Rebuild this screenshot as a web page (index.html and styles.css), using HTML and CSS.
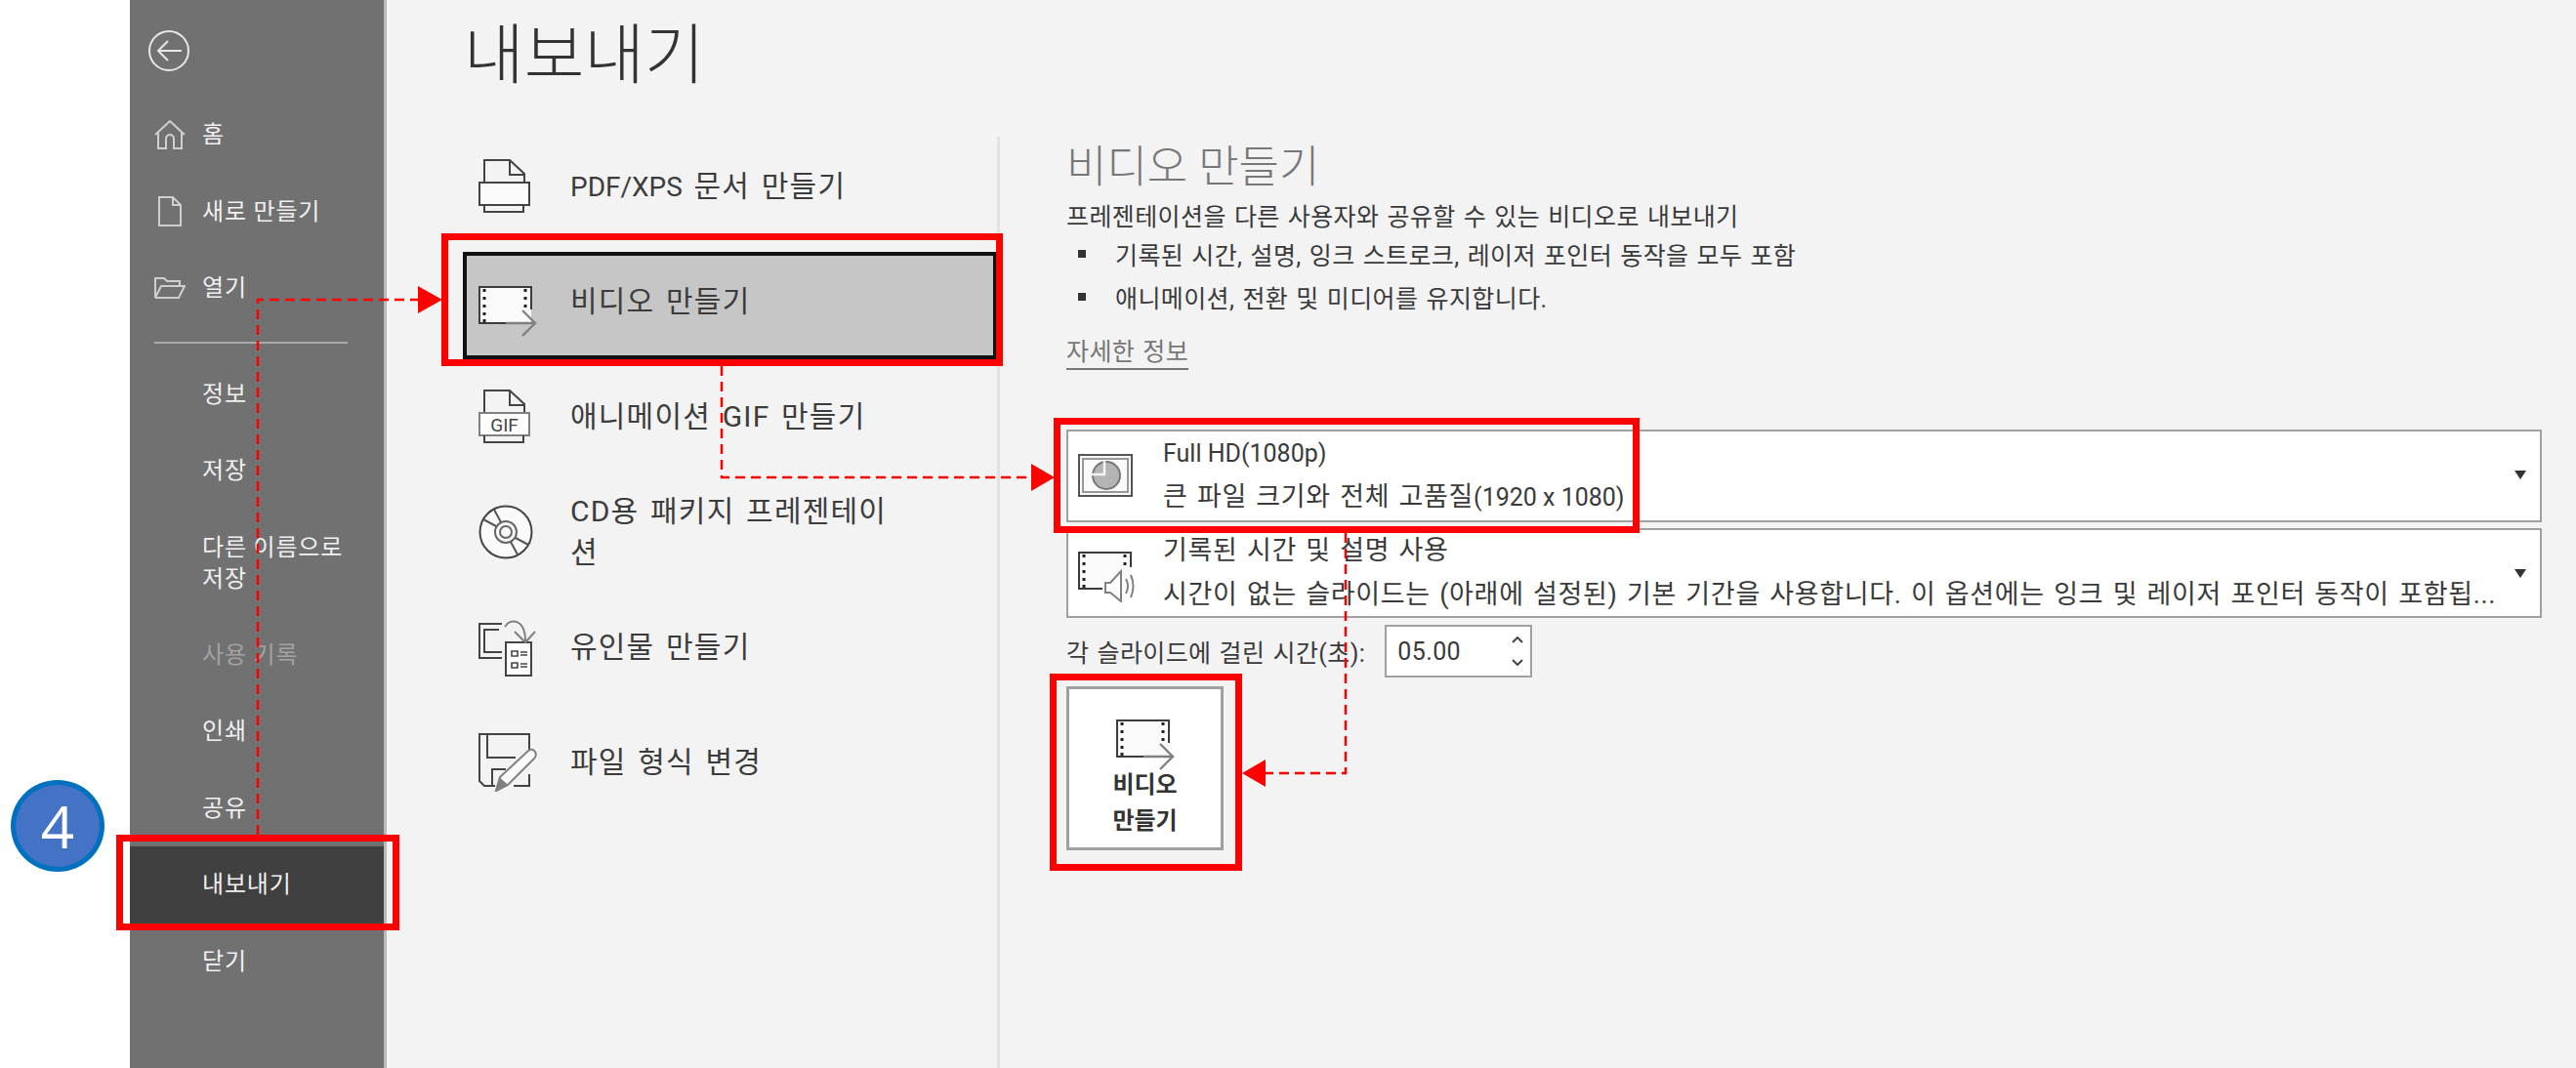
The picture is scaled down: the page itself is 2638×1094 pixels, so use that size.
FILE: index.html
```html
<!DOCTYPE html>
<html lang="ko">
<head>
    <meta charset="UTF-8">
    <title>내보내기</title>
    <link rel="stylesheet" href="styles.css">
</head>
<body>
    <svg class="defs" width="0" height="0">
        <symbol id="film" viewBox="0 0 60 52">
            <rect x="1" y="1" width="53" height="37" fill="#fafafa"/>
            <path d="M28 38H1V1H54V24" fill="none" stroke="#3c3c3c" stroke-width="2"/>
            <path d="M6 3v3M6 11v3M6 19v3M6 27v3M6 34v3M48 3v3M48 11v3M48 19v3" stroke="#222" stroke-width="3"/>
            <path d="M28 38H58M45 25L58 38L45 51" fill="none" stroke="#808080" stroke-width="2.4"/>
        </symbol>
    </svg>

    <div class="page">
        <aside class="sidebar">
            <div class="back">
                <svg width="42" height="42" viewBox="0 0 42 42" fill="none" stroke="#e8e8e8" stroke-width="2"><circle cx="21" cy="21" r="20"/><path d="M10 21H34M20 11L10 21L20 31"/></svg>
            </div>
            <div class="nav-item has-icon">
                <span class="nav-icon"><svg width="32" height="30" viewBox="0 0 32 30" fill="none" stroke="#cfcfcf" stroke-width="2"><path d="M1 15L16 1L31 15M4 13V29H12V19A4 4 0 0 1 20 19V29H28V13"/></svg></span>
                홈
            </div>
            <div class="nav-item has-icon">
                <span class="nav-icon"><svg width="24" height="31" viewBox="0 0 24 31" fill="none" stroke="#cfcfcf" stroke-width="2"><path d="M1 1H15L23 9V30H1ZM15 1V9H23"/></svg></span>
                새로 만들기
            </div>
            <div class="nav-item has-icon">
                <span class="nav-icon"><svg width="32" height="22" viewBox="0 0 32 22" fill="none" stroke="#cfcfcf" stroke-width="2"><path d="M1 21V1H10L13 4H26V8M1 21H25L31 9H7L1 21"/></svg></span>
                열기
            </div>
            <div class="nav-divider"></div>
            <div class="nav-item">정보</div>
            <div class="nav-item">저장</div>
            <div class="nav-item nav-tall">다른 이름으로<br>저장</div>
            <div class="nav-item nav-disabled">사용 기록</div>
            <div class="nav-item">인쇄</div>
            <div class="nav-item">공유</div>
            <div class="nav-item nav-active">내보내기</div>
            <div class="nav-item">닫기</div>
        </aside>

        <main class="main">
            <h1 class="title">내보내기</h1>
            <div class="columns">
                <ul class="export-list">
                    <li class="export-item">
                        <span class="export-icon">
                            <svg width="54" height="56" viewBox="0 0 54 56" fill="none" stroke="#444" stroke-width="2"><path d="M6 24V1H32L47 15V24M32 1V16H47"/><rect x="1" y="24" width="51" height="23" fill="#fbfbfb"/><path d="M6 47V54H46V47"/></svg>
                        </span>
                        <span><span class="pdf-label">PDF/XPS</span> 문서 만들기</span>
                    </li>
                    <li class="export-item selected">
                        <span class="export-icon icon-film"><svg width="60" height="52"><use href="#film"/></svg></span>
                        비디오 만들기
                    </li>
                    <li class="export-item">
                        <span class="export-icon">
                            <svg width="54" height="56" viewBox="0 0 54 56" fill="none" stroke="#444" stroke-width="2"><path d="M6 24V1H32L47 15V24M32 1V16H47"/><rect x="1" y="24" width="51" height="23" fill="#fff" stroke="#808080"/><path d="M6 47V54H46V47"/><text class="gif-label" x="26.500" y="43" text-anchor="middle">GIF</text></svg>
                        </span>
                        애니메이션 GIF 만들기
                    </li>
                    <li class="export-item">
                        <span class="export-icon">
                            <svg width="56" height="56" viewBox="0 0 56 56" fill="none" stroke="#444" stroke-width="2"><circle cx="28" cy="28" r="26.500" fill="#fafafa"/><circle cx="28" cy="28" r="11" stroke="#666"/><circle cx="28" cy="28" r="6" stroke="#666"/><path d="M5 15L18 22M38 34L51 41M33 38L40 51M23 18L16 5" stroke="#555"/></svg>
                        </span>
                        <span>CD용 패키지 프레젠테이<br>션</span>
                    </li>
                    <li class="export-item">
                        <span class="export-icon">
                            <svg width="60" height="59" viewBox="0 0 60 59" fill="none" stroke="#444" stroke-width="2"><path d="M24 5H1V40H24M21 11H6V34H24"/><rect x="28" y="24" width="26" height="34" fill="#fff"/><path d="M34 33h6v5h-6zM34 45h6v5h-6zM43 34h7M43 37h7M43 46h7M43 49h7" stroke-width="1.600"/><path d="M27 8C32 -1 48 -1 48 23M37 13L48 24L58 13" stroke="#808080"/></svg>
                        </span>
                        유인물 만들기
                    </li>
                    <li class="export-item">
                        <span class="export-icon">
                            <svg width="60" height="60" viewBox="0 0 60 60" fill="none" stroke="#444" stroke-width="2"><path d="M52 19V1H1V49L6 54H17M9 1V25H38M14 54V37H28M52 42V54H36"/><path d="M18 59L22 45L51 18Q55 15 58 19Q60 23 57 26L30 53Z" fill="#fbfbfb" stroke="#808080"/><path d="M18 59L22 47L29 53Z" fill="#808080" stroke="#808080"/></svg>
                        </span>
                        파일 형식 변경
                    </li>
                </ul>

                <section class="detail">
                    <h2 class="detail-title">비디오 만들기</h2>
                    <p class="detail-desc">프레젠테이션을 다른 사용자와 공유할 수 있는 비디오로 내보내기</p>
                    <ul class="bullets">
                        <li>기록된 시간, 설명, 잉크 스트로크, 레이저 포인터 동작을 모두 포함</li>
                        <li>애니메이션, 전환 및 미디어를 유지합니다.</li>
                    </ul>
                    <a class="more-link">자세한 정보</a>

                    <div class="dropdown quality">
                        <span class="dropdown-icon">
                            <svg width="56" height="44" viewBox="0 0 56 44" fill="none" stroke="#555" stroke-width="2"><rect x="1" y="1" width="54" height="42" fill="#fafafa"/><rect x="5" y="5" width="46" height="34" stroke="#999"/><circle cx="29" cy="22" r="14" fill="#b4b4b4" stroke="#777"/><path d="M14 21H27V7" stroke="#f4f4f4" stroke-width="2.500"/></svg>
                        </span>
                        <div class="dropdown-text">
                            <div class="latin">Full HD(1080p)</div>
                            <div>큰 파일 크기와 전체 고품질<span class="latin">(1920 x 1080)</span></div>
                        </div>
                        <span class="caret"></span>
                    </div>

                    <div class="dropdown timing">
                        <span class="dropdown-icon">
                            <svg width="60" height="52" viewBox="0 0 60 52" fill="none" stroke="#3c3c3c" stroke-width="2"><rect x="1" y="1" width="53" height="37" fill="#fafafa" stroke="none"/><path d="M25 38H1V1H54V16"/><path d="M6 3v3M6 11v3M6 19v3M6 27v3M6 34v3M48 3v3M48 11v3" stroke="#222" stroke-width="3"/><path d="M28 32V42H33L44 51V20L33 32Z" fill="#fff" stroke="#808080"/><path d="M49 28Q53 35 49 43M54 24Q59 35 54 47" stroke="#808080"/></svg>
                        </span>
                        <div class="dropdown-text">
                            <div>기록된 시간 및 설명 사용</div>
                            <div>시간이 없는 슬라이드는 (아래에 설정된) 기본 기간을 사용합니다. 이 옵션에는 잉크 및 레이저 포인터 동작이 포함됩...</div>
                        </div>
                        <span class="caret"></span>
                    </div>

                    <div class="time-row">
                        <span>각 슬라이드에 걸린 시간(초):</span>
                        <div class="time-input">
                            05.00
                            <svg width="14" height="30" viewBox="0 0 14 30" fill="none" stroke="#444" stroke-width="2"><path d="M2 6L7 1L12 6M2 24L7 29L12 24"/></svg>
                        </div>
                    </div>

                    <div class="make-button">
                        <svg width="60" height="52"><use href="#film"/></svg>
                        <div class="make-label">비디오<br>만들기</div>
                    </div>
                </section>
            </div>
        </main>
    </div>

    <div class="step-badge">4</div>

    <svg class="annotations" width="2638" height="1094" viewBox="0 0 2638 1094" fill="none">
        <g stroke="#ff0000" stroke-width="2.500" stroke-dasharray="10 6">
            <path d="M264 855V307H428"/>
            <path d="M739 375V489H1056"/>
            <path d="M1378 546V792H1296"/>
        </g>
        <g fill="#ff0000">
            <path d="M428 293L453 307L428 321Z"/>
            <path d="M1056 475L1080 489L1056 503Z"/>
            <path d="M1296 778L1272 792L1296 806Z"/>
        </g>
        <g stroke="#ff0000" stroke-width="7">
            <rect x="122.500" y="858.500" width="283" height="91"/>
            <rect x="455.500" y="242.500" width="568" height="129"/>
            <rect x="1082.500" y="431.500" width="593" height="111"/>
            <rect x="1078.500" y="693.500" width="190" height="195"/>
        </g>
    </svg>
</body>
</html>
```

FILE: styles.css
```css
* {
    margin: 0;
    padding: 0;
    box-sizing: border-box;
}

body {
    width: 2638px;
    height: 1094px;
    overflow: hidden;
    position: relative;
    background: #ffffff;
    font-family: 'Roboto', 'Noto Sans CJK KR', sans-serif;
    color: #3a3a3a;
}

ul {
    list-style: none;
}

.defs {
    position: absolute;
}

.page {
    display: flex;
    height: 100%;
    padding-left: 133px;
}

/* Backstage sidebar */
.sidebar {
    width: 263px;
    flex-shrink: 0;
    background: #717171;
    border-right: 3px solid #b9b9b9;
    color: #f0f0f0;
    font-size: 24px;
    letter-spacing: 0.8px;
}

.back {
    height: 99px;
    padding: 31px 0 0 19px;
}

.nav-item {
    height: 78.5px;
    padding-left: 74px;
    display: flex;
    align-items: center;
    line-height: 32px;
}

.nav-item.has-icon {
    padding-left: 24px;
}

.nav-icon {
    width: 50px;
    display: flex;
    justify-content: center;
    padding-right: 16px;
}

.nav-tall {
    height: 110px;
}

.nav-disabled {
    color: #a2a2a2;
}

.nav-active {
    background: #404040;
}

.nav-divider {
    height: 2px;
    margin: 15px 37px 13px 25px;
    background: #a9a9a9;
}

/* Main panel */
.main {
    flex: 1;
    background: #f3f3f3;
}

.title {
    height: 108px;
    margin: 0 0 32px 79px;
    font-size: 67px;
    font-weight: 300;
    line-height: 114px;
    color: #333;
}

.columns {
    display: flex;
    height: 954px;
}

.export-list {
    width: 625px;
    padding-left: 78px;
    flex-shrink: 0;
}

.export-item {
    height: 110px;
    margin-bottom: 8px;
    padding: 0 0 8px 12px;
    border: 4px solid transparent;
    display: flex;
    align-items: center;
    font-size: 30px;
    letter-spacing: 1.2px;
    word-spacing: 3px;
    line-height: 42px;
    color: #3c3c3c;
}

.export-item.selected {
    background: #c6c6c6;
    border-color: #111;
}

.export-icon {
    width: 94px;
    flex-shrink: 0;
    display: flex;
}

.icon-film {
    margin-top: 20px;
}

.pdf-label {
    font-size: 28px;
    letter-spacing: 0;
}

.gif-label {
    font-size: 19px;
    letter-spacing: 0;
    fill: #444;
    stroke: none;
}

/* Right detail column */
.detail {
    flex: 1;
    border-left: 3px solid #e2e2e2;
    padding: 0 35px 0 68px;
    font-size: 25px;
    letter-spacing: 0.4px;
    word-spacing: 1.5px;
}

.detail-title {
    height: 54px;
    font-size: 45px;
    font-weight: 300;
    line-height: 64px;
    letter-spacing: 0;
    word-spacing: 0;
    color: #777;
}

.detail-desc {
    margin-top: 11px;
    line-height: 36px;
}

.bullets {
    margin-top: -3px;
}

.bullets li {
    display: flex;
    align-items: center;
    height: 44px;
    padding-left: 12px;
}

.bullets li::before {
    content: '';
    width: 8px;
    height: 8px;
    margin-right: 30px;
    background: #333;
}

.more-link {
    display: inline-block;
    margin-top: 21px;
    height: 32px;
    line-height: 28px;
    border-bottom: 2px solid #777;
    color: #777;
}

.dropdown {
    display: flex;
    align-items: center;
    background: #fff;
    border: 2px solid #a0a0a0;
    padding-left: 10px;
    font-size: 27px;
    letter-spacing: 0.67px;
    word-spacing: 2px;
}

.quality {
    height: 95px;
    margin-top: 61px;
    padding-bottom: 2px;
}

.timing {
    height: 92px;
    margin-top: 6px;
}

.timing .dropdown-icon {
    margin-top: 8px;
}

.dropdown-icon {
    width: 87px;
    flex-shrink: 0;
    display: flex;
}

.dropdown-text {
    flex: 1;
    line-height: 45px;
    white-space: nowrap;
}

.latin {
    font-size: 25px;
    letter-spacing: 0;
    word-spacing: 0;
}

.caret {
    width: 0;
    height: 0;
    margin: 0 14px;
    border-left: 6.500px solid transparent;
    border-right: 6.500px solid transparent;
    border-top: 9px solid #333;
}

.time-row {
    display: flex;
    align-items: center;
    gap: 20px;
    margin-top: 7px;
}

.time-input {
    width: 151px;
    height: 54px;
    display: flex;
    align-items: center;
    justify-content: space-between;
    padding: 0 6px 0 11px;
    background: #fff;
    border: 2px solid #a0a0a0;
}

.make-button {
    width: 161px;
    height: 168px;
    margin-top: 9px;
    padding-top: 31px;
    display: flex;
    flex-direction: column;
    align-items: center;
    background: #fff;
    border: 3px solid #a0a0a0;
}

.make-label {
    margin-top: -3px;
    font-size: 24px;
    font-weight: 700;
    line-height: 37px;
    letter-spacing: 0;
    text-align: center;
    color: #333;
}

/* Annotations drawn over the screenshot */
.step-badge {
    position: absolute;
    left: 11px;
    top: 799px;
    width: 96px;
    height: 94px;
    border-radius: 50%;
    background: #4472c4;
    border: 5px solid #0070c0;
    display: flex;
    align-items: center;
    justify-content: center;
    font-family: 'Open Sans', sans-serif;
    font-size: 60px;
    color: #fff;
}

.annotations {
    position: absolute;
    left: 0;
    top: 0;
    pointer-events: none;
}
```
